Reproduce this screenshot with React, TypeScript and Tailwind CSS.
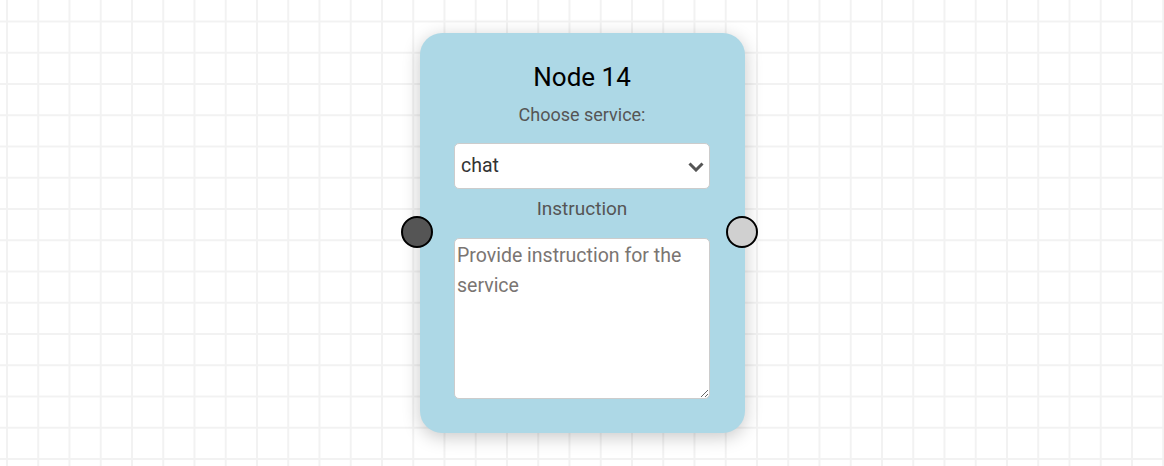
const ServiceNode = () => {
	return (
		<div className="relative flex flex-col items-center w-[325px] h-[400px] pt-[29px] rounded-[22px] bg-[#add8e6] shadow-[0_4px_18px_rgba(0,0,0,0.22)]">
			{/* handles */}
			<div className="absolute left-[-19px] top-[183px] w-[32px] h-[32px] rounded-full border-2 border-black bg-[#555]" />
			<div className="absolute right-[-13px] top-[183px] w-[32px] h-[32px] rounded-full border-2 border-black bg-[#d0d0d0]" />

			<h2 className="text-[26px] leading-[30px] text-black">Node 14</h2>
			<p className="mt-[12px] text-[18px] leading-[22px] text-[#555]">Choose service:</p>

			<div className="relative mt-[17px] w-[256px] h-[46px]">
				<select
					defaultValue="chat"
					className="w-full h-full pl-[6px] text-[19.5px] text-[#333] bg-white border border-[#ccc] rounded-[5px] appearance-none outline-none"
				>
					<option value="chat">chat</option>
					<option value="completion">completion</option>
				</select>
				<svg
					className="absolute right-[6px] top-[19px] pointer-events-none"
					width="16"
					height="10"
					viewBox="0 0 16 10"
				>
					<path d="M1.5 1.5 L8 8 L14.5 1.5" fill="none" stroke="#555" strokeWidth="3" />
				</svg>
			</div>

			<p className="mt-[9px] text-[19px] leading-[22px] text-[#555]">Instruction</p>
			<textarea
				placeholder="Provide instruction for the service"
				className="mt-[18px] w-[256px] h-[161px] p-[2px] text-[19.5px] leading-[30px] text-[#333] bg-white border border-[#ccc] rounded-[5px] outline-none placeholder:text-[#7a7572]"
			/>
		</div>
	);
};

const App = () => {
	return (
		<div className="flex items-center justify-center w-full h-screen bg-white font-['Roboto',sans-serif] bg-[linear-gradient(to_right,#f2f2f2_1.5px,transparent_1.5px),linear-gradient(to_bottom,#f2f2f2_1.5px,transparent_1.5px)] bg-size-[31.25px_31.25px] bg-position-[6px_20.5px]">
			<ServiceNode />
		</div>
	);
};

export default App;
